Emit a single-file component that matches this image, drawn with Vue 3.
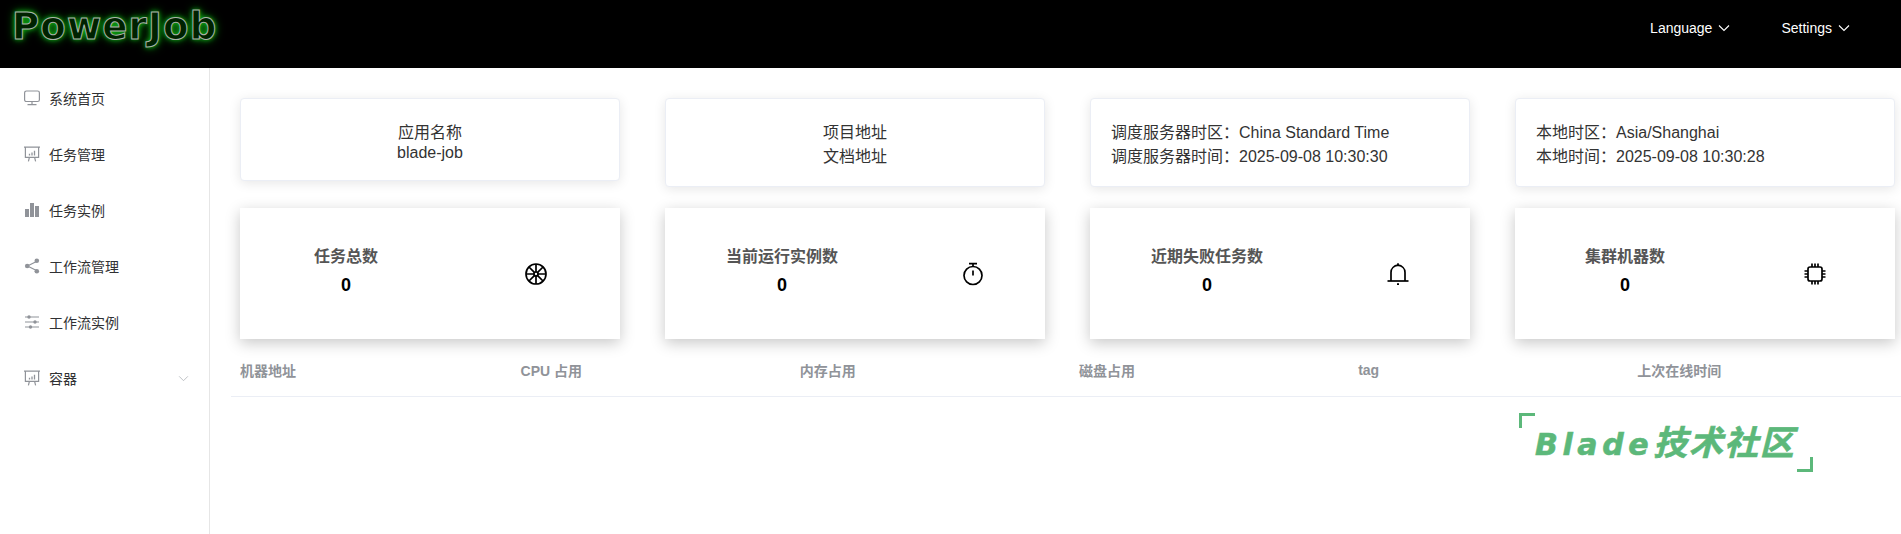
<script setup>
const menu = [
  { label: '系统首页', icon: 'monitor' },
  { label: '任务管理', icon: 'board' },
  { label: '任务实例', icon: 'bars' },
  { label: '工作流管理', icon: 'share' },
  { label: '工作流实例', icon: 'sliders' },
  { label: '容器', icon: 'board', arrow: true },
]
const stats = [
  { label: '任务总数', icon: 'wheel', cls: 's1' },
  { label: '当前运行实例数', icon: 'timer', cls: 's2' },
  { label: '近期失败任务数', icon: 'bell', cls: 's3' },
  { label: '集群机器数', icon: 'chip', cls: 's4' },
]
const cols = ['机器地址', 'CPU 占用', '内存占用', '磁盘占用', 'tag', '上次在线时间']
</script>

<template>
  <div class="page">
    <header class="top">
      <div class="logo">PowerJob</div>
      <nav class="top-nav">
        <span class="top-item lang">Language
          <svg class="caret" viewBox="0 0 12 8"><path d="M1 1.5 6 6.5 11 1.5" /></svg>
        </span>
        <span class="top-item">Settings
          <svg class="caret" viewBox="0 0 12 8"><path d="M1 1.5 6 6.5 11 1.5" /></svg>
        </span>
      </nav>
    </header>
    <div class="body">
      <aside class="side">
        <div v-for="m in menu" :key="m.label" class="mi">
          <svg class="mi-icon" viewBox="0 0 16 16">
            <g v-if="m.icon === 'monitor'" fill="none" stroke="#909399" stroke-width="1.2">
              <rect x="0.6" y="1" width="14.8" height="10.5" rx="1.8" />
              <path d="M8 11.5V14.6M3.5 14.6H12.5" />
            </g>
            <g v-else-if="m.icon === 'board'" fill="none" stroke="#909399" stroke-width="1.2">
              <path d="M0 1.2H16M1.4 1.2V11.4H14.6V1.2M5.4 11.4 4.4 15.4M10.6 11.4 11.6 15.4" />
              <path d="M5.5 9.4V7.8M8 9.4V6.4M10.5 9.4V4.8" stroke-width="1.3" />
            </g>
            <g v-else-if="m.icon === 'bars'" fill="#909399">
              <rect x="1" y="7" width="4" height="8" />
              <rect x="6" y="1" width="4" height="14" />
              <rect x="11" y="4" width="4" height="11" />
            </g>
            <g v-else-if="m.icon === 'share'">
              <path d="M12.5 3.5 3.5 8 12.5 12.5" fill="none" stroke="#909399" stroke-width="1.2" />
              <circle cx="12.8" cy="2.8" r="2.3" fill="#909399" />
              <circle cx="3.2" cy="8" r="2.3" fill="#909399" />
              <circle cx="12.8" cy="13.2" r="2.3" fill="#909399" />
            </g>
            <g v-else>
              <path d="M1 3H15M1 8H15M1 13H15" stroke="#909399" stroke-width="1.1" fill="none" />
              <circle cx="5" cy="3" r="1.7" fill="#909399" />
              <circle cx="11" cy="8" r="1.7" fill="#909399" />
              <circle cx="6.5" cy="13" r="1.7" fill="#909399" />
            </g>
          </svg>
          <span class="mi-text">{{ m.label }}</span>
          <svg v-if="m.arrow" class="mi-arrow" viewBox="0 0 12 8"><path d="M1 1.5 6 6.5 11 1.5" /></svg>
        </div>
      </aside>
      <main class="main">
        <section class="grid">
          <div class="info center short">
            <div>应用名称</div>
            <div>blade-job</div>
          </div>
          <div class="info center">
            <div>项目地址</div>
            <div>文档地址</div>
          </div>
          <div class="info">
            <div>调度服务器时区：China Standard Time</div>
            <div>调度服务器时间：2025-09-08 10:30:30</div>
          </div>
          <div class="info">
            <div>本地时区：Asia/Shanghai</div>
            <div>本地时间：2025-09-08 10:30:28</div>
          </div>
        </section>
        <section class="grid stats">
          <div v-for="s in stats" :key="s.label" class="stat" :class="s.cls">
            <div class="stat-text">
              <div class="stat-label">{{ s.label }}</div>
              <div class="stat-num">0</div>
            </div>
            <svg class="stat-icon" viewBox="0 0 24 24" fill="none" stroke="#000" stroke-width="1.7">
              <g v-if="s.icon === 'wheel'">
                <circle cx="12" cy="12" r="10" />
                <circle cx="12" cy="12" r="2" />
                <path d="M12 2V10M12 14V22M2 12H10M14 12H22M5 5 10.6 10.6M13.4 13.4 19 19M19 5 13.4 10.6M10.6 13.4 5 19" />
              </g>
              <g v-else-if="s.icon === 'timer'">
                <circle cx="12" cy="13.5" r="9" />
                <path d="M8 1.6H16M12 2V4.5M12 8.5V13.5" />
              </g>
              <g v-else-if="s.icon === 'bell'">
                <path d="M5 19V10.5C5 6.5 8 3.6 12 3.2 16 3.6 19 6.5 19 10.5V19" />
                <path d="M1.5 19H22.5" />
                <path d="M11 22.2H13M12 1.2V3.2" />
              </g>
              <g v-else>
                <rect x="5" y="5" width="14" height="14" rx="2" />
                <path d="M9 1.5V5M12 1.5V5M15 1.5V5M9 19V22.5M12 19V22.5M15 19V22.5M1.5 9H5M1.5 12H5M1.5 15H5M19 9H22.5M19 12H22.5M19 15H22.5" />
              </g>
            </svg>
          </div>
        </section>
        <div class="thead">
          <div v-for="c in cols" :key="c" class="th">{{ c }}</div>
        </div>
        <div class="brand">
          <span class="corner tl"></span>
          <span class="brand-text"><span class="brand-latin">Blade</span>技术社区</span>
          <span class="corner br"></span>
        </div>
      </main>
    </div>
  </div>
</template>

<style>
html, body { margin: 0; background: #fff; }
</style>

<style scoped>
.page {
  width: 1901px;
  height: 534px;
  overflow: hidden;
  font-family: "Liberation Sans", "Noto Sans CJK SC", sans-serif;
  color: #333;
  font-size: 14px;
}
.top {
  height: 68px;
  background: #000;
  display: flex;
  justify-content: space-between;
  align-items: flex-start;
  color: #fff;
}
.logo {
  margin: 5px 0 0 12px;
  font-family: "DejaVu Sans", sans-serif;
  font-weight: 700;
  font-size: 37px;
  line-height: 44px;
  letter-spacing: 1.2px;
  color: #020;
  -webkit-text-stroke: 1px #aab3aa;
  text-shadow: 0 0 5px #0fbf16, 0 0 10px #0c9a12;
}
.top-nav {
  display: flex;
  padding: 19px 51px 0 0;
  gap: 51px;
  line-height: 18px;
}
.top-item {
  display: flex;
  align-items: center;
  gap: 6px;
  font-size: 14px;
}
.caret {
  width: 12px;
  height: 8px;
  fill: none;
  stroke: #fff;
  stroke-width: 1.1;
}
.body {
  display: flex;
  height: 466px;
}
.side {
  width: 209px;
  border-right: 1px solid #e6e6e6;
  flex: none;
  padding-top: 2px;
  box-sizing: content-box;
}
.mi {
  height: 56px;
  display: flex;
  align-items: center;
  padding-left: 24px;
  color: #303133;
  font-size: 14px;
}
.mi-icon {
  width: 16px;
  height: 16px;
  margin-right: 9px;
  flex: none;
}
.mi-arrow {
  width: 11px;
  height: 7px;
  margin-left: 101px;
  fill: none;
  stroke: #b5b8bd;
  stroke-width: 1;
}
.main {
  flex: 1;
  padding: 30px 0 0 21px;
  min-width: 0;
}
.grid {
  display: flex;
  gap: 45px;
  margin-left: 9px;
}
.info {
  width: 380px;
  height: 89px;
  box-sizing: border-box;
  background: #fff;
  border: 1px solid #ebeef5;
  border-radius: 4px;
  box-shadow: 0 2px 12px 0 rgba(0, 0, 0, 0.1);
  padding: 22px 20px;
  font-size: 16px;
  line-height: 24px;
  flex: none;
}
.center {
  text-align: center;
}
.short {
  height: 83px;
  line-height: 20px;
  padding-top: 24px;
}
.stats { margin-top: 21px; }
.stat {
  width: 380px;
  height: 131px;
  flex: none;
  display: flex;
  background: #fff;
  box-shadow: 0 4px 14px rgba(0, 0, 0, 0.22);
  position: relative;
}
.stat-text {
  position: absolute;
  top: 37px;
  text-align: center;
  transform: translateX(-50%);
  white-space: nowrap;
}
.s1 .stat-text { left: 106px; }
.s2 .stat-text { left: 117px; }
.s3 .stat-text { left: 117px; }
.s4 .stat-text { left: 110px; }
.stat-label {
  font-size: 16px;
  font-weight: 700;
  line-height: 24px;
  color: #555;
}
.stat-num {
  font-size: 18px;
  font-weight: 700;
  line-height: 24px;
  margin-top: 4px;
  color: #000;
}
.stat-icon {
  position: absolute;
  top: 54px;
  width: 24px;
  height: 24px;
}
.s1 .stat-icon { left: 284px; }
.s2 .stat-icon { left: 296px; }
.s3 .stat-icon { left: 296px; }
.s4 .stat-icon { left: 288px; }
.thead {
  display: flex;
  height: 58px;
  border-bottom: 1px solid #ebeef5;
  box-sizing: border-box;
  align-items: center;
  padding: 4px 0 0 9px;
}
.th {
  width: 279.2px;
  flex: none;
  font-size: 14px;
  font-weight: 700;
  color: #909399;
}
.th:first-child { width: 280.6px; }
.brand {
  position: absolute;
  left: 1519px;
  top: 413px;
  width: 294px;
  height: 59px;
  box-sizing: border-box;
  padding-left: 16px;
  display: flex;
  align-items: center;
}
.brand-text {
  font-family: "Noto Sans CJK SC", sans-serif;
  font-weight: 700;
  font-style: italic;
  font-size: 34px;
  letter-spacing: 1.5px;
  color: #5cb87a;
  -webkit-text-stroke: 0.6px #5cb87a;
  white-space: nowrap;
  line-height: 40px;
}
.brand-latin {
  font-family: "DejaVu Sans", sans-serif;
  font-size: 30px;
  letter-spacing: 4.6px;
}
.corner {
  position: absolute;
  width: 13px;
  height: 12px;
  border: 0 solid #5cb87a;
}
.tl { left: 0; top: 0; border-width: 3px 0 0 3px; }
.br { right: 0; bottom: 0; border-width: 0 3px 3px 0; }
</style>
